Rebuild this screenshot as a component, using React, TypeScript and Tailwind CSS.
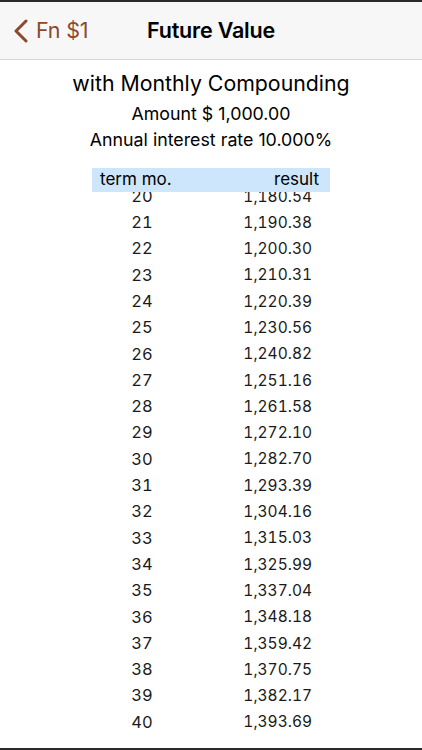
import React from "react";

const rows: [number, string][] = [
  [20, "1,180.54"],
  [21, "1,190.38"],
  [22, "1,200.30"],
  [23, "1,210.31"],
  [24, "1,220.39"],
  [25, "1,230.56"],
  [26, "1,240.82"],
  [27, "1,251.16"],
  [28, "1,261.58"],
  [29, "1,272.10"],
  [30, "1,282.70"],
  [31, "1,293.39"],
  [32, "1,304.16"],
  [33, "1,315.03"],
  [34, "1,325.99"],
  [35, "1,337.04"],
  [36, "1,348.18"],
  [37, "1,359.42"],
  [38, "1,370.75"],
  [39, "1,382.17"],
  [40, "1,393.69"],
];

const App = () => {
  return (
    <div
      className="w-[422px] h-[750px] bg-white flex flex-col overflow-hidden border-t-2 border-b-2 border-[#2a2a2a]"
      style={{ fontFamily: "Inter, 'Noto Sans', sans-serif" }}
    >
      <header className="h-[58px] shrink-0 bg-[#f7f7f7] border-b border-[#d6d6d6] flex items-center relative">
        <div className="flex items-center pl-[12px] gap-[7px] text-[#8b4a2b]">
          <svg width="17" height="24" viewBox="0 0 17 24">
            <path
              d="M14 2 L4 12 L14 22"
              fill="none"
              stroke="#8b4a2b"
              strokeWidth="3"
              strokeLinecap="round"
              strokeLinejoin="round"
            />
          </svg>
          <span className="text-[21.5px] tracking-[-0.2px]">Fn $1</span>
        </div>
        <h1 className="absolute left-0 right-0 text-center text-[21.5px] font-semibold text-black tracking-[-0.2px] pointer-events-none">
          Future Value
        </h1>
      </header>

      <div className="flex flex-col items-center text-black">
        <p className="mt-[9px] text-[21.3px] leading-[28px]">with Monthly Compounding</p>
        <p className="mt-[4px] text-[17.8px] leading-[26px]">Amount $ 1,000.00</p>
        <p className="text-[17.8px] leading-[26px]">Annual interest rate 10.000%</p>
      </div>

      <div className="mt-[15px] mx-auto w-[238px] flex flex-col min-h-0 flex-1">
        <div className="h-[24px] shrink-0 bg-[#cde6fb] flex items-center justify-between pl-[8px] pr-[11px] text-[17px] text-black">
          <span>term mo.</span>
          <span>result</span>
        </div>
        <div className="flex-1 overflow-hidden">
          <div className="-mt-[9px] flex flex-col">
            {rows.map(([term, value]) => (
              <div
                key={term}
                className="h-[26.3px] flex items-center text-[#1a1a1a] tabular-nums"
              >
                <span className="w-[100px] text-center text-[16.5px]">{term}</span>
                <span className="w-[120px] text-right text-[15.5px]">{value}</span>
              </div>
            ))}
          </div>
        </div>
      </div>
    </div>
  );
};

export default App;
